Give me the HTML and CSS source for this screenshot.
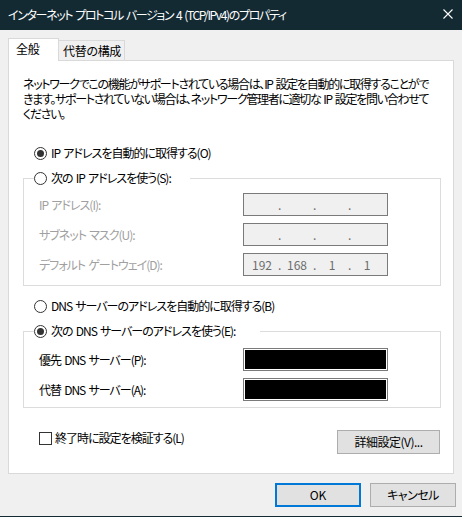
FILE: index.html
```html
<!DOCTYPE html>
<html lang="ja">
<head>
<meta charset="utf-8">
<title>インターネット プロトコル バージョン 4 (TCP/IPv4)のプロパティ</title>
<link rel="stylesheet" href="styles.css">
</head>
<body>
<div class="window">
  <div class="titlebar">
    <span class="title">インターネット プロトコル バージョン 4 (TCP/IPv4)のプロパティ</span>
    <svg class="close" width="10" height="10" viewBox="0 0 10 10"><path d="M0.5 0.5 L9.5 9.5 M9.5 0.5 L0.5 9.5" stroke="#fff" stroke-width="1.1" fill="none"/></svg>
  </div>
  <div class="client">
    <div class="tabs">
      <div class="tab active">全般</div>
      <div class="tab">代替の構成</div>
    </div>
    <div class="panel">
      <p class="desc">ネットワークでこの機能がサポートされている場合は、IP 設定を自動的に取得することがで<br>きます。サポートされていない場合は、ネットワーク管理者に適切な IP 設定を問い合わせて<br>ください。</p>

      <div class="option first-option"><span class="radio checked"></span><span>IP アドレスを自動的に取得する(O)</span></div>

      <fieldset class="group ip-group">
        <legend class="legend ip-legend"><span class="radio"></span><span>次の IP アドレスを使う(S):</span></legend>
        <div class="rows ip-rows">
          <div class="row disabled"><span class="label">IP アドレス(I):</span>
            <div class="ipbox"><span class="seg"></span><span class="dot">.</span><span class="seg"></span><span class="dot">.</span><span class="seg"></span><span class="dot">.</span><span class="seg"></span></div>
          </div>
          <div class="row disabled"><span class="label">サブネット マスク(U):</span>
            <div class="ipbox"><span class="seg"></span><span class="dot">.</span><span class="seg"></span><span class="dot">.</span><span class="seg"></span><span class="dot">.</span><span class="seg"></span></div>
          </div>
          <div class="row disabled"><span class="label">デフォルト ゲートウェイ(D):</span>
            <div class="ipbox"><span class="seg">192</span><span class="dot">.</span><span class="seg">168</span><span class="dot">.</span><span class="seg">1</span><span class="dot">.</span><span class="seg">1</span></div>
          </div>
        </div>
      </fieldset>

      <div class="option dns-option"><span class="radio"></span><span>DNS サーバーのアドレスを自動的に取得する(B)</span></div>

      <fieldset class="group dns-group">
        <legend class="legend dns-legend"><span class="radio checked"></span><span>次の DNS サーバーのアドレスを使う(E):</span></legend>
        <div class="rows dns-rows">
          <div class="row"><span class="label">優先 DNS サーバー(P):</span><div class="ipbox redacted"><div class="fill"></div></div></div>
          <div class="row"><span class="label">代替 DNS サーバー(A):</span><div class="ipbox redacted"><div class="fill"></div></div></div>
        </div>
      </fieldset>

      <div class="bottom-row">
        <div class="check-option"><span class="checkbox"></span><span>終了時に設定を検証する(L)</span></div>
        <button class="btn advanced">詳細設定(V)...</button>
      </div>
    </div>
    <div class="dialog-buttons">
      <button class="btn default">OK</button>
      <button class="btn">キャンセル</button>
    </div>
  </div>
</div>
</body>
</html>
```

FILE: styles.css
```css
* { box-sizing: border-box; }
html, body {
  margin: 0;
  padding: 0;
  background: #f0f0f0;
}
body {
  font-family: "Noto Sans CJK JP", sans-serif;
  font-size: 12px;
  font-feature-settings: "palt";
  letter-spacing: -1px;
  word-spacing: 1.5px;
  color: #000;
  width: 462px;
  height: 517px;
  overflow: hidden;
}
.window {
  width: 462px;
  height: 517px;
  display: flex;
  flex-direction: column;
  border-bottom: 1px solid #132a33;
}
.titlebar {
  height: 30px;
  background: #132a33;
  color: #fff;
  display: flex;
  align-items: center;
  justify-content: space-between;
  padding: 0 9px 0 8px;
  flex: none;
}
.title { line-height: 16px; margin-top: -1px; letter-spacing: -1.35px; }
.close { display: block; margin-top: -2px; }

.client {
  flex: 1;
  padding: 8px 8px 0 8px;
  display: flex;
  flex-direction: column;
}
.tabs {
  display: flex;
  align-items: flex-start;
  height: 23px;
  margin-bottom: -1px;
  position: relative;
  z-index: 1;
}
.tab {
  border: 1px solid #d9d9d9;
  background: #f0f0f0;
  line-height: 16px;
  letter-spacing: -0.3px;
}
.tab.active {
  width: 51px;
  height: 23px;
  background: #fff;
  border-bottom: none;
  padding: 2px 0 0 7px;
}
.tab:not(.active) {
  width: 66px;
  height: 20px;
  margin-top: 2px;
  border-left: none;
  border-bottom: none;
  padding: 2px 0 0 4px;
}

.panel {
  width: 446px;
  height: 414px;
  background: #fff;
  border: 1px solid #d9d9d9;
  padding: 15px 12px 0 14px;
  display: flex;
  flex-direction: column;
}
.desc {
  margin: 0;
  line-height: 15px;
  white-space: nowrap;
  letter-spacing: -1.3px;
}
.option, .legend, .check-option {
  display: flex;
  align-items: center;
  height: 16px;
  line-height: 16px;
  white-space: nowrap;
}
.option { margin-left: 11px; }
.first-option { margin-top: 24px; }
.dns-option { margin-top: 12px; }

.radio {
  width: 13px;
  height: 13px;
  border: 1px solid #333;
  border-radius: 50%;
  background: #fff;
  margin-right: 4px;
  flex: none;
  display: flex;
  align-items: center;
  justify-content: center;
}
.radio.checked::after {
  content: "";
  width: 7px;
  height: 7px;
  border-radius: 50%;
  background: #333;
}

.group {
  margin: 9px 0 0 0;
  padding: 0;
  border: 1px solid #dcdcdc;
  width: 418px;
  min-width: 0;
}
.legend {
  padding: 0;
  margin-left: 10px;
}
.ip-legend { width: 156px; }
.dns-legend { width: 226px; }

.rows {
  display: flex;
  flex-direction: column;
  gap: 7px;
  padding: 0 52px 0 15px;
}
.ip-rows { margin-top: 7px; padding-bottom: 9px; }
.dns-rows { margin-top: 9px; padding-bottom: 6px; }
.row {
  display: flex;
  align-items: center;
  justify-content: space-between;
  height: 23px;
}
.row.disabled .label { color: #a0a0a0; }
.ipbox {
  width: 145px;
  height: 23px;
  border: 1px solid #7a7a7a;
  background: #f0f0f0;
  display: grid;
  grid-template-columns: 32px 3px 32px 3px 32px 3px 32px;
  padding-left: 2px;
  align-items: center;
  color: #6d6d6d;
  line-height: 16px;
  letter-spacing: 0;
}
.seg { text-align: center; }
.dot { text-align: center; }
.ipbox.redacted {
  display: block;
  background: #fff;
  padding: 1px;
}
.fill { width: 100%; height: 100%; background: #000; }

.bottom-row {
  margin-top: 22px;
  display: flex;
  justify-content: space-between;
  align-items: flex-start;
  padding: 0 0 0 16px;
  width: 417px;
}
.checkbox {
  width: 13px;
  height: 13px;
  border: 1px solid #333;
  background: #fff;
  margin-right: 3px;
  flex: none;
}
.btn {
  font: inherit;
  font-feature-settings: "palt";
  letter-spacing: -0.5px;
  height: 24px;
  background: #e1e1e1;
  border: 1px solid #adadad;
  color: #000;
  padding: 0;
  line-height: 16px;
}
.advanced { width: 103px; }
.dialog-buttons {
  margin-top: 9px;
  display: flex;
  justify-content: flex-end;
  gap: 9px;
  margin-right: -2px;
}
.dialog-buttons .btn { width: 86px; }
.btn.default { border: 2px solid #0078d7; letter-spacing: 0; }
```
